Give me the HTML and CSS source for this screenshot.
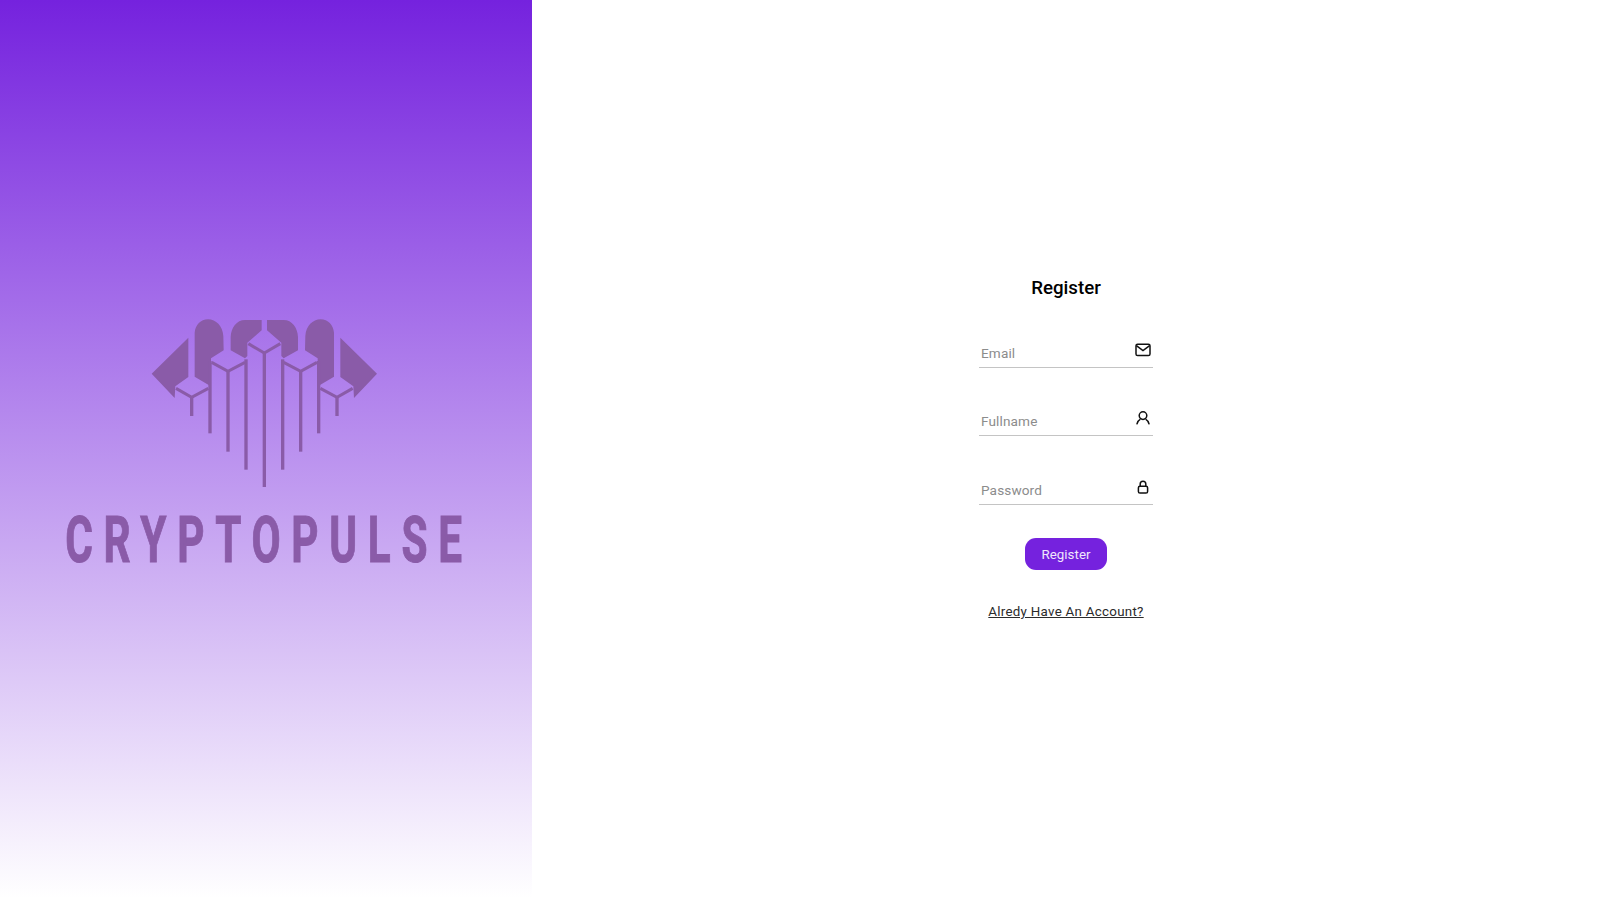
FILE: index.html
```html
<!DOCTYPE html>
<html lang="en">
<head>
<meta charset="utf-8">
<title>CryptoPulse - Register</title>
<link rel="stylesheet" href="styles.css">
</head>
<body>
<div class="page">
  <aside class="brand">
    <svg class="logo" viewBox="0 0 810 600" aria-hidden="true">
      <defs>
        <g id="half">
          <path d="M65 218 L175 110 L175 228 L136 256 L134 291 Z"/>
          <path d="M194 95 C196 72 212 55 234 55 C258 55 278 75 280 105 L281 148 L243 172 L243 250 L236 252 L194 227 Z"/>
          <path d="M395 57 L345 57 C320 57 303 80 302 108 L302 148 L345 172 L352 165 L352 125 L395 88 Z"/>
          <path class="ln" d="M138 262 L185 289 L235 262"/>
          <path class="ln" d="M245 184 L294 211 L345 184"/>
          <path class="ln" d="M355 128 L403 156"/>
          <rect x="180" y="285" width="10" height="60"/>
          <rect x="235" y="180" width="10" height="217"/>
          <rect x="289" y="207" width="10" height="245"/>
          <rect x="343" y="175" width="10" height="331"/>
        </g>
      </defs>
      <use href="#half"/>
      <use href="#half" transform="matrix(-1 0 0 1 806 0)"/>
      <rect x="398" y="153" width="10" height="405"/>
    </svg>
    <div class="wordmark">CRYPTOPULSE</div>
  </aside>
  <main class="main">
    <form class="form">
      <h1 class="title">Register</h1>
      <label class="field">
        <input class="input" type="text" placeholder="Email">
        <svg class="icon" viewBox="0 0 16 16" aria-hidden="true"><rect x="1" y="2.2" width="14" height="11.4" rx="1.6"/><path d="M1.4 3.6 L8 8.6 L14.6 3.6"/></svg>
      </label>
      <label class="field field-wide">
        <input class="input" type="text" placeholder="Fullname">
        <svg class="icon" viewBox="0 0 16 16" aria-hidden="true"><circle cx="8" cy="5.6" r="3.8"/><path d="M1.8 14.4 Q3 10.4 5.4 9.2 M14.2 14.4 Q13 10.4 10.6 9.2"/></svg>
      </label>
      <label class="field">
        <input class="input" type="password" placeholder="Password">
        <svg class="icon" viewBox="0 0 16 16" aria-hidden="true"><rect x="3.4" y="7.2" width="9.2" height="6.8" rx="1.6"/><path d="M5.2 7.2 V5 A2.8 2.8 0 0 1 10.8 5 V7.2"/></svg>
      </label>
      <button class="button" type="button">Register</button>
      <a class="link" href="#">Alredy Have An Account?</a>
    </form>
  </main>
</div>
</body>
</html>
```
FILE: styles.css
```css
* { box-sizing: border-box; }
html, body { margin: 0; height: 100%; }
body { font-family: Roboto, "Liberation Sans", sans-serif; background: #fff; }
.page { display: flex; height: 898px; overflow: hidden; }
.brand {
  width: 532px;
  flex: none;
  display: flex;
  flex-direction: column;
  align-items: center;
  justify-content: center;
  padding: 0 3px 20px 0;
  background: linear-gradient(180deg, #7522de 0%, #ffffff 100%);
}
.logo { width: 270px; height: 200px; display: block; flex: none; fill: #8a5ba8; }
.logo .ln { fill: none; stroke: #8a5ba8; stroke-width: 9; }
.wordmark {
  width: 400px;
  flex: none;
  margin-top: 2px;
  display: flex;
  justify-content: center;
  font-family: Roboto, "Liberation Sans", sans-serif;
  font-weight: 700;
  font-size: 65px;
  line-height: 75px;
  letter-spacing: 16.5px;
  text-indent: 12px;
  color: #8a5ba8;
  -webkit-text-stroke: 1px #8a5ba8;
  white-space: nowrap;
  transform: scaleX(0.65);
}
.main { flex: 1; display: flex; align-items: center; justify-content: center; }
.form { width: 174px; display: flex; flex-direction: column; align-items: center; padding: 1px 0 1px; }
.title { margin: 0 0 37px; font-size: 18.72px; line-height: 22px; font-weight: 500; color: #000; }
.field {
  width: 100%;
  height: 32px;
  flex: none;
  margin-bottom: 36px;
  display: flex;
  align-items: center;
  border-bottom: 1px solid #c4c4c4;
}
.field-wide { margin-bottom: 37px; }
.field:last-of-type { margin-bottom: 33px; }
.input {
  flex: 1;
  min-width: 0;
  border: 0;
  outline: 0;
  padding: 2px 0 0 2px;
  background: transparent;
  font: 400 13.6px/20px Roboto, sans-serif;
  letter-spacing: 0.12px;
  color: #333;
}
.input::placeholder { color: #8c8c8c; opacity: 1; }
.icon {
  width: 16px;
  height: 16px;
  flex: none;
  margin: 0 2px 4px 0;
  fill: none;
  stroke: #111;
  stroke-width: 1.5;
}
.button {
  width: 82px;
  height: 32px;
  flex: none;
  border: 0;
  border-radius: 11px;
  background: #7522de;
  color: #f0e6fc;
  font: 400 13.33px/32px Roboto, sans-serif;
  letter-spacing: 0.05px;
  padding: 1px 0 0;
}
.link {
  margin-top: 33px;
  font-size: 13.33px;
  line-height: 18px;
  letter-spacing: 0.28px;
  color: #2b2b2b;
  white-space: nowrap;
}
```
